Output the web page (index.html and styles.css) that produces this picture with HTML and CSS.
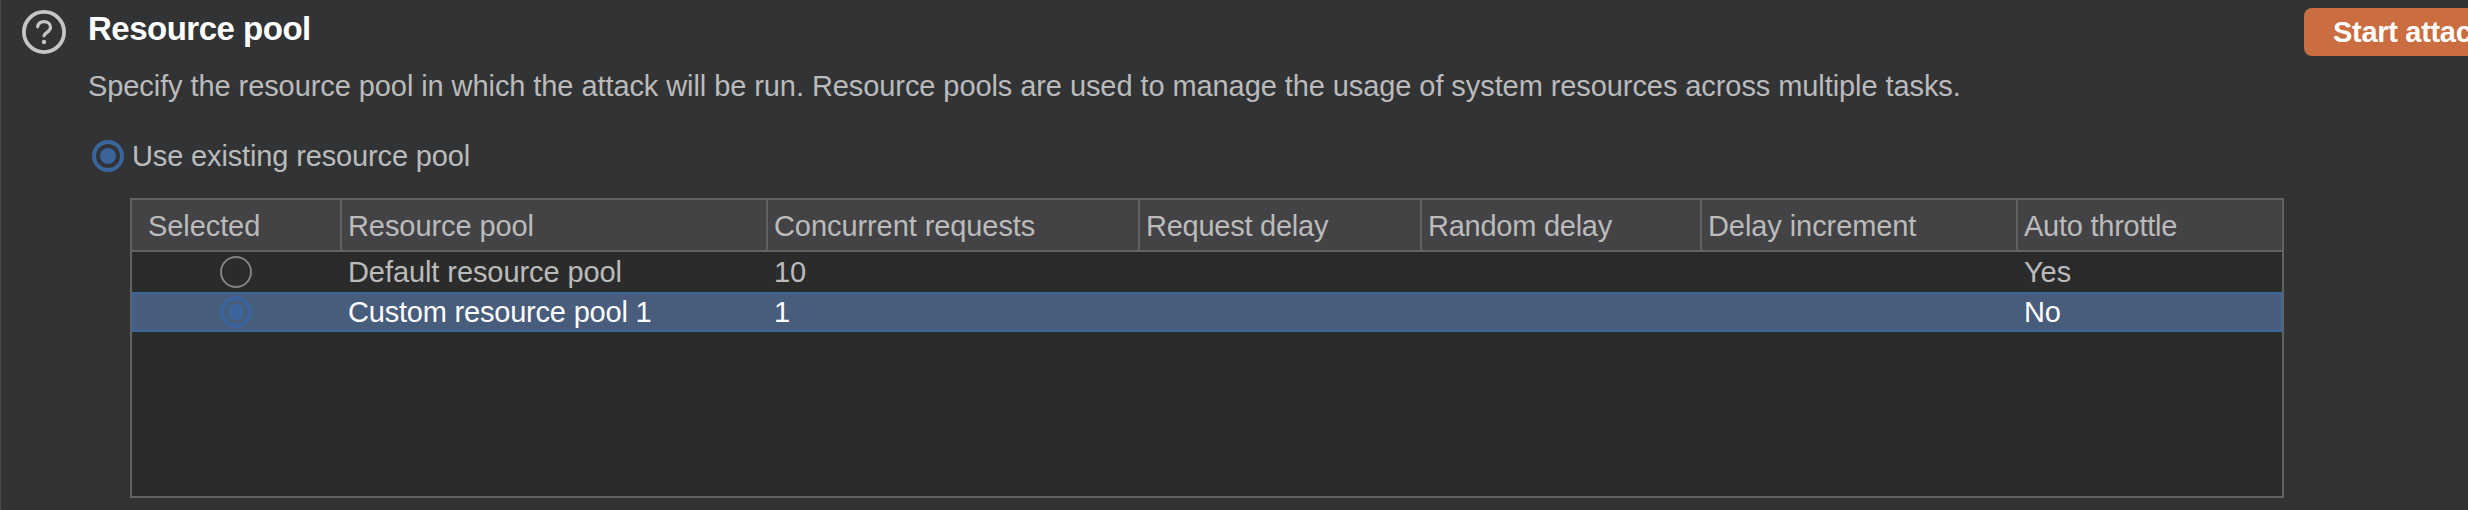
FILE: index.html
```html
<!DOCTYPE html>
<html lang="en">
<head>
<meta charset="utf-8">
<title>Resource pool</title>
<link rel="stylesheet" href="styles.css">
</head>
<body>
<main class="panel">
  <svg class="help" viewBox="0 0 44 44" fill="none" stroke="#c4c5c7" stroke-linecap="round">
    <circle cx="22" cy="22" r="20.1" stroke-width="3.8"/>
    <path d="M15.6 16.8C16.2 13.7 18.6 11.6 22 11.6c3.8 0 6.5 2.4 6.5 5.7 0 4.6-5.4 5-6.5 8.4" stroke-width="3.2"/>
    <circle cx="22" cy="32" r="2.2" fill="#c4c5c7" stroke="none"/>
  </svg>
  <section class="content">
    <h1 class="title">Resource pool</h1>
    <p class="description">Specify the resource pool in which the attack will be run. Resource pools are used to manage the usage of system resources across multiple tasks.</p>
    <label class="option"><span class="radio radio-on"></span><span class="option-label">Use existing resource pool</span></label>
    <div class="table">
      <div class="row head">
        <div class="cell first">Selected</div><div class="cell">Resource pool</div><div class="cell">Concurrent requests</div><div class="cell tight">Request delay</div><div class="cell tight">Random delay</div><div class="cell">Delay increment</div><div class="cell tight">Auto throttle</div>
      </div>
      <div class="row">
        <div class="cell pick"><span class="radio"></span></div><div class="cell">Default resource pool</div><div class="cell">10</div><div class="cell"></div><div class="cell"></div><div class="cell"></div><div class="cell">Yes</div>
      </div>
      <div class="row selected">
        <div class="cell pick"><span class="radio radio-on"></span></div><div class="cell">Custom resource pool 1</div><div class="cell">1</div><div class="cell"></div><div class="cell"></div><div class="cell"></div><div class="cell">No</div>
      </div>
    </div>
  </section>
  <button class="start">Start attack</button>
</main>
</body>
</html>
```
FILE: styles.css
```css
* { box-sizing: border-box; }

body {
  margin: 0;
  background: #323335;
  color: #bbbbbb;
  font: 29px/40px "Liberation Sans", Arial, sans-serif;
  overflow: hidden;
}

.panel {
  display: flex;
  width: 2468px;
  height: 510px;
  border-left: 1px solid #47484a;
  overflow: hidden;
}

.help {
  flex: none;
  width: 44px;
  height: 44px;
  margin: 10px 0 0 21px;
}

.content {
  flex: none;
  display: flex;
  flex-direction: column;
  width: 2238px;
  padding-left: 21px;
}

.title {
  margin: 9px 0 0 1px;
  color: #ffffff;
  font-size: 33px;
  line-height: 40px;
  letter-spacing: -0.5px;
}

.description {
  margin: 17px 0 0 1px;
  letter-spacing: -0.08px;
  white-space: nowrap;
}

.option {
  display: flex;
  align-items: center;
  gap: 8px;
  margin: 30px 0 0 5px;
  height: 40px;
}

.option-label { letter-spacing: -0.14px; }

.radio {
  display: grid;
  place-items: center;
  flex: none;
  width: 32px;
  height: 32px;
  border: 2px solid #828282;
  border-radius: 50%;
}

.radio-on { border: 4px solid #3a659c; }

.radio-on::after {
  content: "";
  width: 16px;
  height: 16px;
  border-radius: 50%;
  background: #3a659c;
}

.table {
  width: 2154px;
  height: 300px;
  margin: 22px 0 0 43px;
  border: 2px solid #616263;
  background: #2b2b2b;
}

.row {
  display: grid;
  grid-template-columns: 208px 426px 372px 282px 280px 316px 266px;
  height: 40px;
}

.cell {
  padding-left: 8px;
  letter-spacing: -0.08px;
  white-space: nowrap;
}

.head {
  height: 52px;
  border-bottom: 2px solid #616263;
  background: #434345;
  line-height: 52px;
}

.head .cell + .cell {
  border-left: 2px solid #616263;
  padding-left: 6px;
}

.head .tight { letter-spacing: -0.25px; }

.head .first { padding-left: 16px; }

.pick {
  display: grid;
  place-items: center;
  padding: 0;
}

.selected {
  color: #ffffff;
  background: #485c7b;
  box-shadow: inset 0 0 0 2px #3a659c;
}

.selected .cell { letter-spacing: -0.2px; }

.start {
  flex: none;
  width: 228px;
  height: 48px;
  margin: 8px 0 0;
  padding: 0 0 0 29px;
  border: 0;
  border-radius: 8px;
  background: #ca6d40;
  color: #ffffff;
  font: bold 29px/48px "Liberation Sans", Arial, sans-serif;
  letter-spacing: -0.3px;
  text-align: left;
}
```
